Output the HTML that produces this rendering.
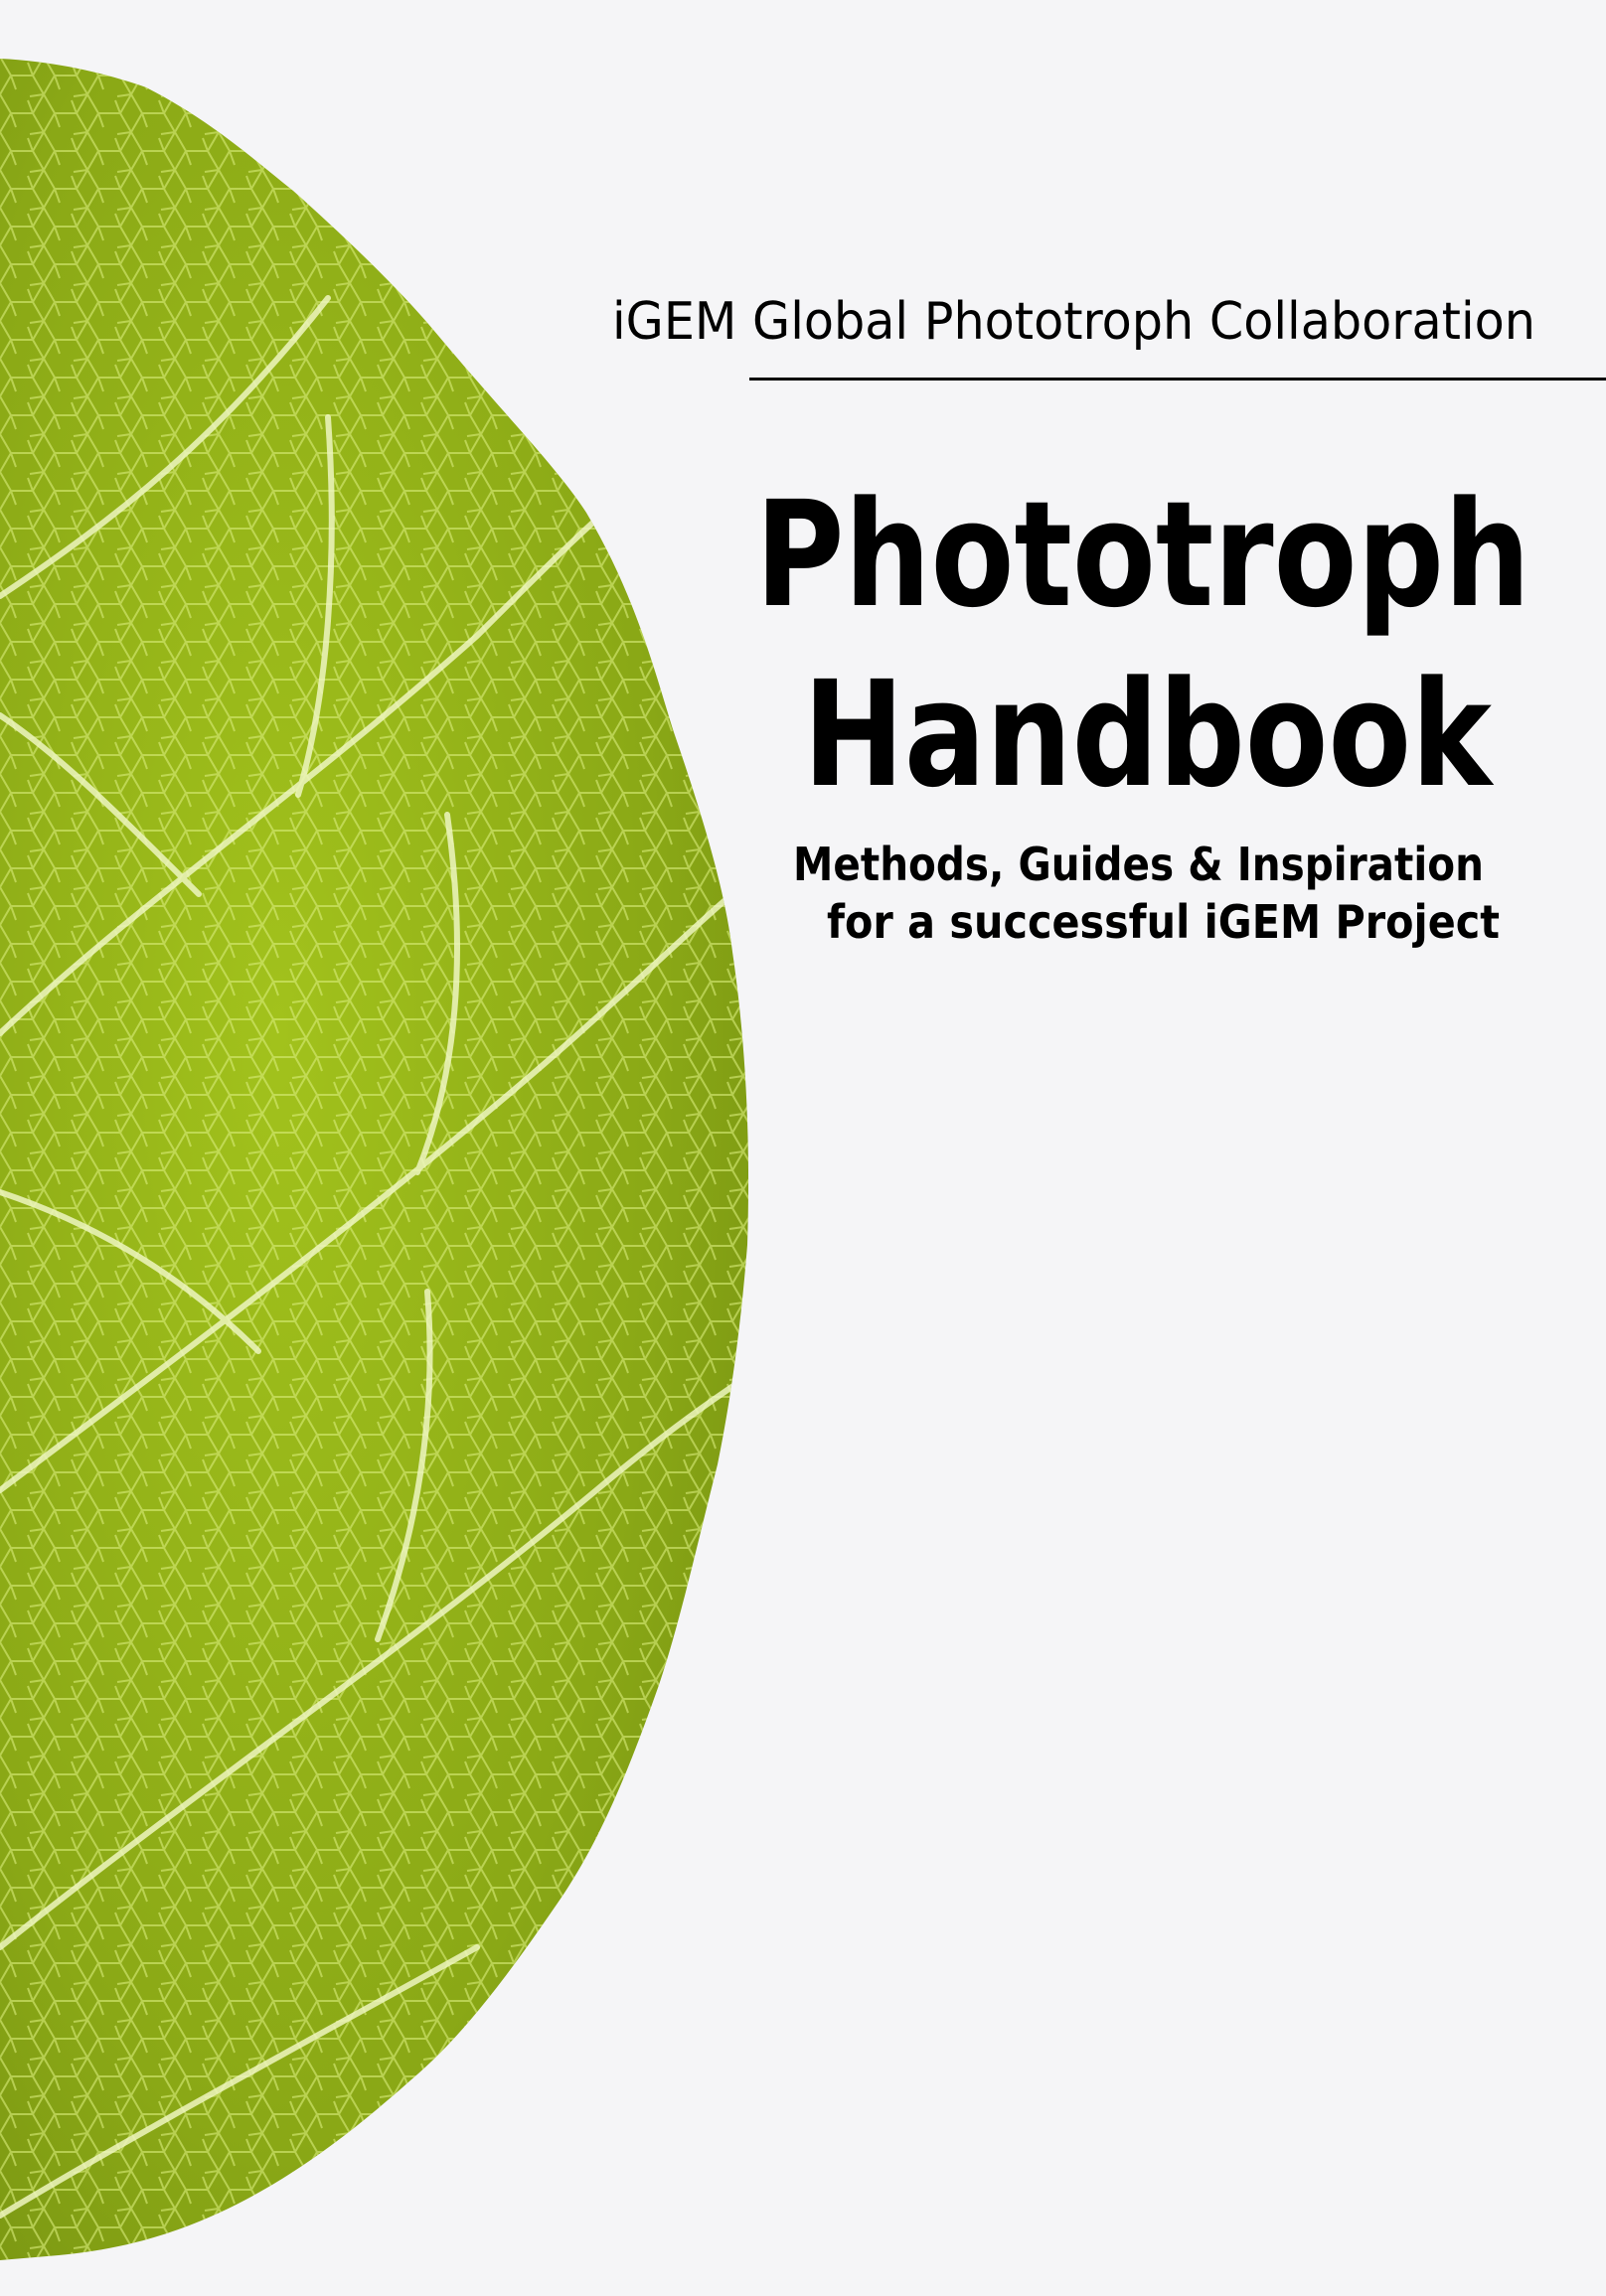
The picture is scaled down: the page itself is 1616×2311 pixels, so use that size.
<!DOCTYPE html>
<html><head><meta charset="utf-8"><style>
html,body{margin:0;padding:0;background:#f5f5f7;}
body{width:1616px;height:2311px;overflow:hidden;position:relative;}
svg{position:absolute;left:0;top:0;}
</style></head><body>
<svg width="1616" height="2311" viewBox="0 0 1616 2311" xmlns="http://www.w3.org/2000/svg">
<defs>
<radialGradient id="g" cx="0.35" cy="0.45" r="0.8">
<stop offset="0" stop-color="#a2c21c"/>
<stop offset="0.6" stop-color="#8aa816"/>
<stop offset="1" stop-color="#6f8a10"/>
</radialGradient>
<pattern id="cells" width="44" height="38" patternUnits="userSpaceOnUse">
<path d="M0 19 L11 0 L33 0 L44 19 L33 38 L11 38 Z M11 0 L16 14 M33 38 L28 25 M44 19 L30 21" fill="none" stroke="#d9ec7a" stroke-width="2" opacity="0.6"/>
</pattern>
<clipPath id="leaf"><path d="M0 59 C60 62 110 75 147 88 C210 120 255 160 295 192 C360 250 410 300 442 339 C510 420 560 470 590 516 C640 600 660 680 678 737 C710 830 730 900 737 958 C752 1060 755 1160 752 1253 C745 1340 735 1410 722 1474 C700 1560 685 1630 663 1696 C630 1790 600 1860 560 1917 C510 1990 465 2050 413 2094 C350 2150 290 2195 221 2227 C160 2255 110 2265 59 2270 L0 2275 Z"/></clipPath>
</defs>
<g clip-path="url(#leaf)">
<rect width="800" height="2311" fill="url(#g)"/>
<rect width="800" height="2311" fill="url(#cells)"/>
<g fill="none" stroke="#eef6c0" stroke-width="6" opacity="0.85" stroke-linecap="round">
<path d="M0 1040 C150 900 300 800 480 640 C560 560 600 520 650 480"/>
<path d="M0 1500 C200 1350 400 1200 560 1060 C640 990 700 930 760 880"/>
<path d="M0 1960 C200 1800 420 1650 600 1500 C660 1450 700 1420 760 1380"/>
<path d="M0 600 C120 520 220 440 330 300"/>
<path d="M0 2230 C150 2140 300 2060 480 1960"/>
<path d="M300 800 C330 700 340 560 330 420"/>
<path d="M420 1180 C460 1080 470 960 450 820"/>
<path d="M380 1650 C420 1540 440 1420 430 1300"/>
<path d="M200 900 C120 820 60 760 0 720"/>
<path d="M260 1360 C180 1280 90 1230 0 1200"/>
</g>
</g>
<g font-family="'DejaVu Sans',sans-serif" fill="#000">
<text x="616" y="341" font-size="52" textLength="929" lengthAdjust="spacingAndGlyphs">iGEM Global Phototroph Collaboration</text>
<rect x="754" y="380" width="862" height="3" fill="#000"/>
<text x="760" y="609" font-size="147" font-weight="bold" textLength="780" lengthAdjust="spacingAndGlyphs">Phototroph</text>
<text x="808" y="790" font-size="147" font-weight="bold" textLength="693" lengthAdjust="spacingAndGlyphs">Handbook</text>
<text x="798" y="886" font-size="46" font-weight="bold" textLength="695" lengthAdjust="spacingAndGlyphs">Methods, Guides &amp; Inspiration</text>
<text x="832" y="944" font-size="46" font-weight="bold" textLength="677" lengthAdjust="spacingAndGlyphs">for a successful iGEM Project</text>
</g>
</svg>
</body></html>
